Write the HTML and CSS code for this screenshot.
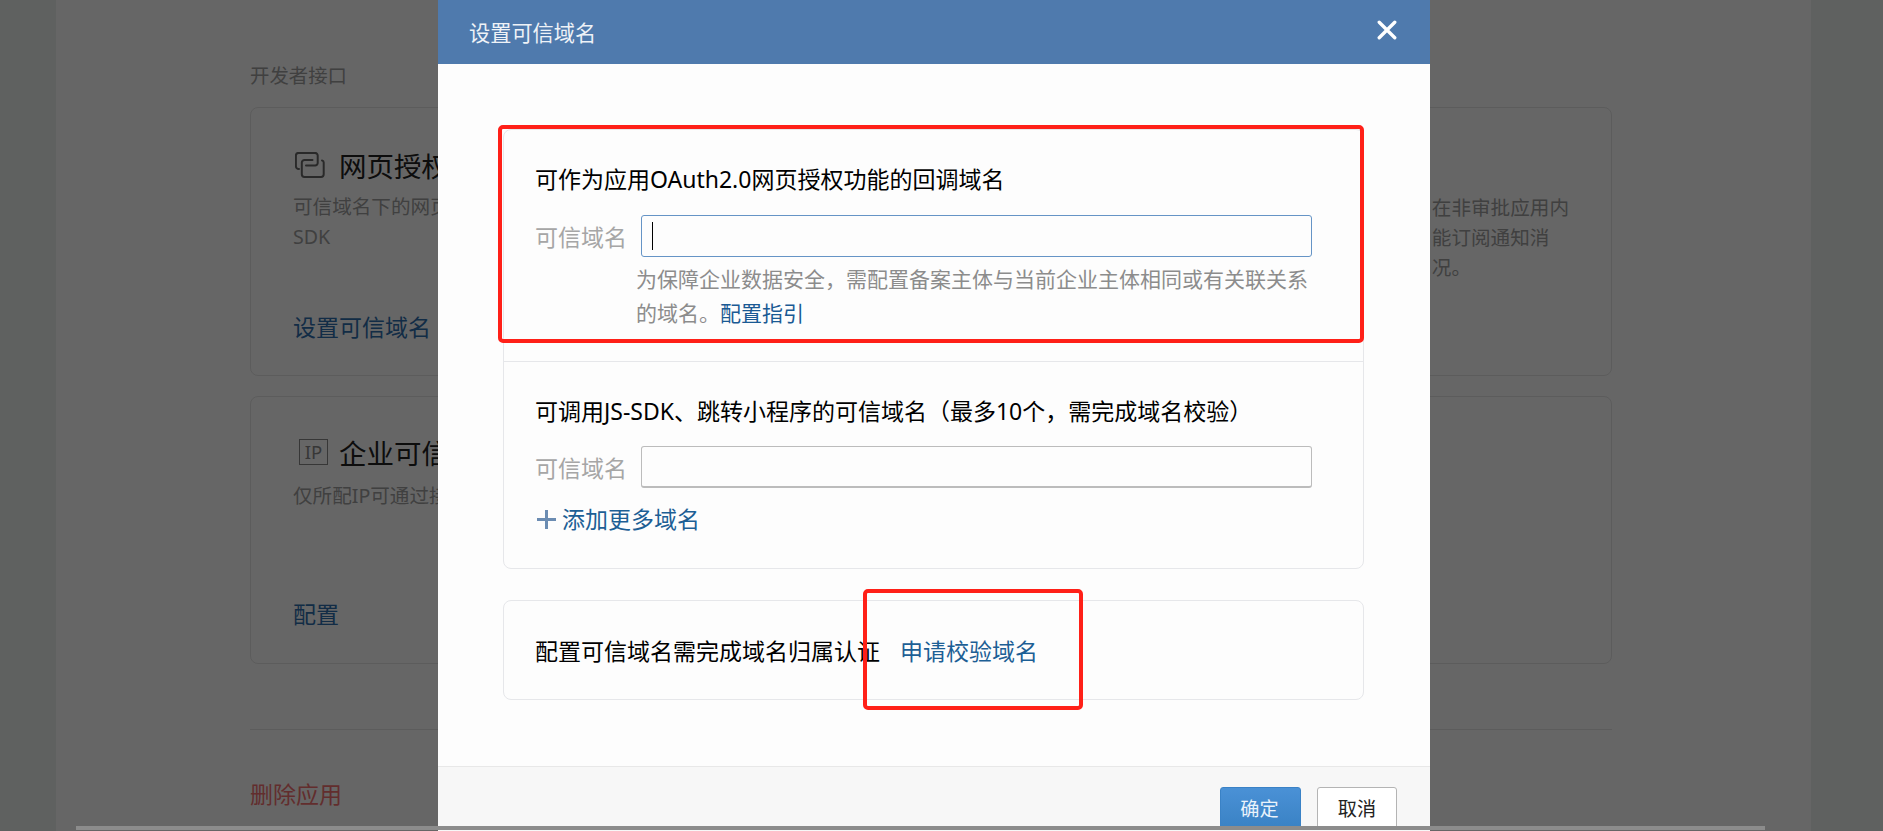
FILE: index.html
```html
<!DOCTYPE html>
<html lang="zh-CN">
<head>
    <meta charset="UTF-8">
    <title>设置可信域名</title>
    <link rel="stylesheet" href="styles.css">
</head>
<body>
    <!-- Page behind the dialog -->
    <div class="page">
        <div class="section-label">开发者接口</div>
        <div class="card-grid">
            <div class="api-card">
                <div class="api-title">
                    <svg class="icon-auth" viewBox="0 0 30 26" fill="none" stroke="#666" stroke-width="2" stroke-linecap="round">
                        <path d="M4 17C1.8 17 .9 15.7 .9 14V3.6A2.7 2.7 0 0 1 3.6 .9H20A2.7 2.7 0 0 1 22.7 3.6V11A2.5 2.5 0 0 1 20.2 13.5H11"/>
                        <path d="M17.5 8H9.5A2.7 2.7 0 0 0 6.8 10.7V22.3A2.7 2.7 0 0 0 9.5 25H26A2.7 2.7 0 0 0 28.7 22.3V10.5A2 2 0 0 0 27 8.5"/>
                    </svg>
                    <span>网页授权及JS-SDK</span>
                </div>
                <p class="api-desc">可信域名下的网页可用网页授权及JS-<br>SDK</p>
                <a class="api-link" href="#">设置可信域名</a>
            </div>
            <div class="api-card api-card-right">
                <p class="api-desc">在非审批应用内<br>能订阅通知消<br>况。</p>
            </div>
            <div class="api-card api-card-low">
                <div class="api-title">
                    <span class="icon-ip">IP</span>
                    <span>企业可信IP</span>
                </div>
                <p class="api-desc">仅所配IP可通过接口调用</p>
                <a class="api-link" href="#">配置</a>
            </div>
            <div class="api-card api-card-right api-card-low"></div>
        </div>
        <div class="page-rule"></div>
        <a class="delete-link" href="#">删除应用</a>
    </div>

    <div class="overlay"></div>

    <!-- Dialog -->
    <div class="dialog">
        <div class="dialog-header">
            <span class="dialog-title">设置可信域名</span>
            <svg class="dialog-close" viewBox="0 0 18 18" stroke="#fff" stroke-width="3" stroke-linecap="round">
                <path d="M2 2L16 16M16 2L2 16"/>
            </svg>
        </div>
        <div class="dialog-body">
            <div class="domain-card">
                <div class="domain-section domain-section-first">
                    <div class="domain-title">可作为应用OAuth2.0网页授权功能的回调域名</div>
                    <div class="field-row">
                        <label class="field-label">可信域名</label>
                        <div class="field-input field-input-focus"><span class="caret"></span></div>
                    </div>
                    <p class="field-hint">为保障企业数据安全，需配置备案主体与当前企业主体相同或有关联关系的域名。<a href="#">配置指引</a></p>
                </div>
                <div class="domain-section domain-section-second">
                    <div class="domain-title">可调用JS-SDK、跳转小程序的可信域名（最多10个，需完成域名校验）</div>
                    <div class="field-row">
                        <label class="field-label">可信域名</label>
                        <div class="field-input"></div>
                    </div>
                    <a class="add-more" href="#"><span class="add-plus"></span>添加更多域名</a>
                </div>
            </div>
            <div class="verify-card">
                <span>配置可信域名需完成域名归属认证</span>
                <a href="#">申请校验域名</a>
            </div>
        </div>
        <div class="dialog-footer">
            <button class="btn btn-primary">确定</button>
            <button class="btn">取消</button>
        </div>
        <!-- Red annotation boxes -->
        <div class="mark mark-top"></div>
        <div class="mark mark-verify"></div>
    </div>

    <div class="scroll-thumb"></div>
</body>
</html>
```

FILE: styles.css
```css
html, body {
    height: 100%;
}
body {
    margin: 0;
    overflow: hidden;
    background-color: #edf2f0;
    font-family: "Noto Sans", "Noto Sans CJK SC", sans-serif;
    color: #000;
}
a {
    text-decoration: none;
}
p {
    margin: 0;
}

/* Page behind the dialog */
.page {
    margin: 0 72px 0 56px;
    padding: 60px 199px 0 194px;
    height: 100%;
    box-sizing: border-box;
    background-color: #fff;
}
.section-label {
    font-size: 19.4px;
    line-height: 32px;
    color: #a0a0a0;
}
.card-grid {
    display: grid;
    grid-template-columns: 1fr 1fr;
    gap: 20px 30px;
    margin-top: 15px;
}
.api-card {
    height: 269px;
    box-sizing: border-box;
    border: 1.5px solid #e6e6e6;
    border-radius: 8px;
    padding: 40px 42px 0;
}
.api-card-low {
    height: 268px;
    padding-top: 38px;
}
.api-card-right {
    padding-left: 502px;
}
.api-card-right .api-desc {
    margin-top: 45px;
    white-space: nowrap;
}
.api-title {
    display: flex;
    align-items: center;
    height: 34px;
    font-size: 27.5px;
    color: #222;
}
.icon-auth {
    width: 30px;
    height: 26px;
    margin: 0 14px 0 2px;
    flex-shrink: 0;
}
.icon-ip {
    width: 27px;
    height: 24px;
    margin: 0 11px 0 6px;
    border: 1.5px solid #8a8a8a;
    text-align: center;
    line-height: 24px;
    font-size: 18.5px;
    color: #8a8a8a;
}
.api-desc {
    margin-top: 10px;
    height: 90px;
    font-size: 19.6px;
    line-height: 30px;
    color: #a0a0a0;
}
.api-card-low .api-desc {
    margin-top: 12px;
}
.api-link {
    display: block;
    margin-top: 30px;
    font-size: 23px;
    line-height: 30px;
    color: #2f6fae;
}
.api-card-low .api-link {
    margin-top: 28px;
}
.page-rule {
    margin-top: 65px;
    border-top: 1.5px solid #e6e6e6;
}
.delete-link {
    display: block;
    margin-top: 49px;
    font-size: 23px;
    line-height: 30px;
    color: #f57272;
}

.overlay {
    position: fixed;
    top: 0;
    right: 0;
    bottom: 0;
    left: 0;
    background-color: rgba(0, 0, 0, 0.6);
}

/* Dialog */
.dialog {
    position: fixed;
    top: 0;
    left: 438px;
    width: 992px;
    height: 831px;
    display: flex;
    flex-direction: column;
    background-color: #fdfdfd;
}
.dialog-header {
    height: 64px;
    flex-shrink: 0;
    display: flex;
    align-items: center;
    justify-content: space-between;
    padding: 0 33px 4px 31px;
    box-sizing: border-box;
    background-color: #4f7aad;
}
.dialog-title {
    font-size: 21.2px;
    color: #eef2f7;
    margin-top: 2px;
}
.dialog-close {
    width: 20px;
    height: 20px;
}
.dialog-body {
    flex: 1;
    padding: 65px 66px 0 65px;
}
.domain-card,
.verify-card {
    border: 1.5px solid #e6e7ea;
    border-radius: 8px;
}
.domain-section {
    padding: 34px 32px 32px 31px;
}
.domain-section-first {
    padding-bottom: 31px;
    border-bottom: 1.5px solid #e6e7ea;
}
.domain-section-second .field-row {
    margin-top: 20px;
}
.domain-title {
    font-size: 23px;
    line-height: 30px;
}
.field-row {
    display: flex;
    align-items: center;
    margin-top: 21px;
}
.field-label {
    width: 106px;
    flex-shrink: 0;
    font-size: 23px;
    color: #a6a6a6;
}
.field-input {
    width: 671px;
    height: 42px;
    box-sizing: border-box;
    border: 1.5px solid #bcbcbc;
    border-bottom-width: 2px;
    border-radius: 3px;
    padding: 6px 10px;
}
.field-input-focus {
    border: 1.5px solid #6594c6;
}
.caret {
    display: block;
    width: 1px;
    height: 28px;
    background-color: #000;
}
.field-hint {
    margin: 5px 0 0 101px;
    width: 680px;
    font-size: 21px;
    line-height: 34px;
    color: #8c8c8c;
}
.field-hint a {
    color: #1a5a94;
}
.add-more {
    display: flex;
    align-items: center;
    margin-top: 16px;
    padding-bottom: 2px;
    font-size: 23px;
    line-height: 30px;
    color: #1d5f95;
}
.add-plus {
    position: relative;
    width: 19px;
    height: 19px;
    margin: 0 6px 0 2px;
}
.add-plus::before,
.add-plus::after {
    content: "";
    position: absolute;
    background-color: #6b8cb2;
}
.add-plus::before {
    left: 0;
    right: 0;
    top: 8px;
    height: 3px;
}
.add-plus::after {
    top: 0;
    bottom: 0;
    left: 8px;
    width: 3px;
}
.verify-card {
    display: flex;
    align-items: center;
    height: 100px;
    box-sizing: border-box;
    margin-top: 31px;
    padding: 0 32px 0 31px;
    font-size: 23px;
}
.verify-card a {
    margin-left: 20px;
    color: #1d5f95;
}
.dialog-footer {
    height: 65px;
    flex-shrink: 0;
    display: flex;
    justify-content: flex-end;
    gap: 16px;
    padding: 20px 33px 0 0;
    box-sizing: border-box;
    border-top: 1.5px solid #e8e8e8;
    background-color: #f7f7f7;
}
.btn {
    width: 80px;
    height: 42px;
    padding: 0;
    font-family: inherit;
    font-size: 19.2px;
    color: #222;
    background-color: #fff;
    border: 1.5px solid #b4b4b4;
    border-radius: 3px;
}
.btn-primary {
    width: 81px;
    padding-right: 2px;
    color: #eaf3fb;
    border-color: #3a82c6;
    background: linear-gradient(#4a91d6, #3a82c4);
}

/* Annotations drawn over the screenshot */
.mark {
    position: absolute;
    box-sizing: border-box;
    border: 4px solid #ff2018;
    border-radius: 5px;
}
.mark-top {
    left: 60px;
    top: 125px;
    width: 866px;
    height: 218px;
}
.mark-verify {
    left: 425px;
    top: 589px;
    width: 220px;
    height: 121px;
}

.scroll-thumb {
    position: fixed;
    left: 76px;
    bottom: 1px;
    width: 1689px;
    height: 4px;
    background-color: #8c8c8c;
}
```
